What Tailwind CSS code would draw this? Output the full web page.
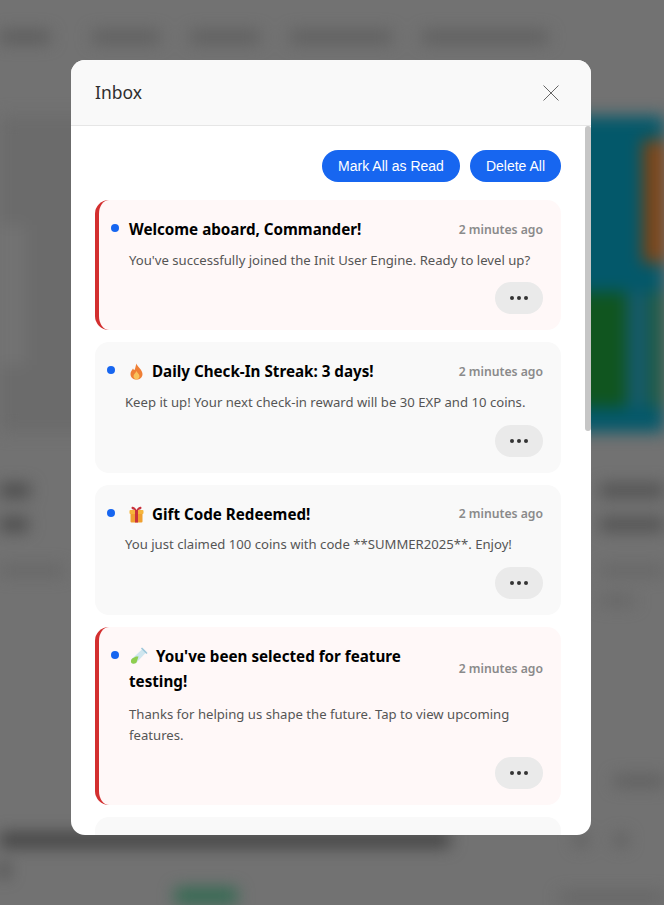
<!DOCTYPE html>
<html lang="en">
<head>
  <meta charset="UTF-8">
  <meta name="viewport" content="width=device-width, initial-scale=1.0">
  <title>Inbox</title>
  <script src="https://cdn.jsdelivr.net/npm/@tailwindcss/browser@4"></script>
</head>
<body class="bg-[#727272] overflow-hidden font-['Noto_Sans',sans-serif]">
<div class="relative w-[664px] h-[905px] overflow-hidden">

  <!-- Blurred page behind the modal -->
  <div class="w-[664px] h-[905px] blur-[8px]">
    <div class="h-[116px] pt-[31px] flex gap-[30px]">
      <div class="w-[50px] h-[12px] bg-[#5a5a5a]"></div>
      <div class="w-[68px] h-[12px] ml-[12px] bg-[#5e5e5e]"></div>
      <div class="w-[70px] h-[12px] bg-[#5e5e5e]"></div>
      <div class="w-[102px] h-[12px] bg-[#5e5e5e]"></div>
      <div class="w-[126px] h-[12px] bg-[#5e5e5e]"></div>
    </div>
    <div class="h-[316px] flex justify-between">
      <div class="w-[100px] bg-[#6b6b6b] pt-[109px]">
        <div class="w-[25px] h-[140px] bg-[#737373]"></div>
      </div>
      <div class="w-[90px] bg-[#03586a] pt-[24px] pb-[25px] flex flex-col justify-between">
        <div class="ml-[69px] h-[123px] bg-[#7f4313]"></div>
        <div class="h-[115px] flex">
          <div class="w-[53px] bg-[#10551f]"></div>
          <div class="w-[20px] bg-[#155a6e]"></div>
          <div class="flex-1 bg-[#1b5a45]"></div>
        </div>
      </div>
    </div>
    <div class="h-[401px] pt-[52px] flex justify-between">
      <div class="w-[40px] flex flex-col gap-[21px]">
        <div class="w-[30px] h-[13px] bg-[#484848]"></div>
        <div class="w-[28px] h-[13px] bg-[#484848]"></div>
        <div class="w-[64px] h-[9px] mt-[14px] bg-[#646464]"></div>
      </div>
      <div class="w-[64px] flex flex-col gap-[21px]">
        <div class="h-[13px] bg-[#505050]"></div>
        <div class="h-[13px] bg-[#505050]"></div>
        <div class="h-[9px] mt-[14px] bg-[#646464]"></div>
        <div class="w-[34px] h-[9px] bg-[#646464]"></div>
        <div class="h-[10px] mt-[150px] ml-[14px] bg-[#5c5c5c]"></div>
      </div>
    </div>
    <div class="flex justify-between pr-[36px]">
      <div class="w-[450px] h-[14px] bg-[#404040]"></div>
      <div class="flex gap-[26px]">
        <div class="w-[14px] h-[14px] rounded-full bg-[#5e5e5e]"></div>
        <div class="w-[14px] h-[14px] rounded-full bg-[#5e5e5e]"></div>
      </div>
    </div>
    <div class="w-[8px] h-[14px] mt-[16px] bg-[#404040]"></div>
    <div class="flex justify-between mt-[11px]">
      <div class="w-[62px] h-[16px] ml-[175px] bg-[#2f6a50]"></div>
      <div class="w-[104px] h-[9px] mt-[5px] bg-[#626262]"></div>
    </div>
  </div>

  <!-- Inbox modal -->
  <div class="absolute inset-0 pt-[60px] pl-[71px]">
    <div class="relative w-[520px] h-[775px] rounded-[14px] bg-white overflow-hidden flex flex-col">
      <div class="h-[66px] shrink-0 bg-[#f9f9f9] border-b border-[#e6e6e6] pl-[24px] pr-[32px] flex items-center justify-between">
        <h2 class="text-[17.5px] text-[#2e2e2e]">Inbox</h2>
        <svg class="w-[16px] h-[16px]" viewBox="0 0 16 16" fill="none" stroke="#666666" stroke-width="1"><path d="M0.5 0.5 15.5 15.5M15.5 0.5 0.5 15.5"/></svg>
      </div>

      <div class="flex-1 overflow-hidden pl-[24px] pr-[30px] pt-[24px]">
        <div class="flex justify-end gap-[10px] mb-[18px] font-['Liberation_Sans',sans-serif]">
          <button class="h-[32px] w-[138px] rounded-full bg-[#1766f0] text-white text-[14px]">Mark All as Read</button>
          <button class="h-[32px] w-[91px] rounded-full bg-[#1766f0] text-white text-[14px]">Delete All</button>
        </div>

        <div class="flex flex-col gap-[12px]">
          <!-- unread -->
          <div class="relative rounded-[14px] bg-[#fff8f8] border-l-4 border-[#d32f2f] pl-[30px] pr-[18px] pt-[16px] pb-[16px]">
            <span class="absolute left-[12px] top-[24px] w-[8px] h-[8px] rounded-full bg-[#1766f0]"></span>
            <div class="flex items-center justify-between gap-[16px]">
              <h3 class="pt-[1px] text-[15.2px] leading-[25.5px] font-bold text-black">Welcome aboard, Commander!</h3>
              <span class="shrink-0 mt-[1px] text-[12.2px] font-semibold text-[#8a8a8a]">2 minutes ago</span>
            </div>
            <p class="mt-[7px] text-[13.13px] leading-[20.8px] text-[#555555]">You've successfully joined the Init User Engine. Ready to level up?</p>
            <div class="flex justify-end mt-[12px]">
              <button class="h-[32px] w-[48px] rounded-full bg-[#eaeaea] flex items-center justify-center gap-[3px]">
                <i class="w-[4px] h-[4px] rounded-full bg-[#333333]"></i><i class="w-[4px] h-[4px] rounded-full bg-[#333333]"></i><i class="w-[4px] h-[4px] rounded-full bg-[#333333]"></i>
              </button>
            </div>
          </div>

          <div class="relative rounded-[14px] bg-[#f9f9f9] pl-[30px] pr-[18px] pt-[16px] pb-[16px]">
            <span class="absolute left-[12px] top-[24px] w-[8px] h-[8px] rounded-full bg-[#1766f0]"></span>
            <div class="flex items-center justify-between gap-[16px]">
              <h3 class="pt-[1px] text-[15.2px] leading-[25.5px] font-bold text-black pl-[4px]">
                <svg class="inline-block w-[15px] h-[17px] mr-[8px] align-[-3px]" viewBox="0 0 15 17"><path d="M7.5 0.5C8 3.5 13.5 6.5 13.5 11C13.5 14.5 11 16.5 7.5 16.5C4 16.5 1.5 14.5 1.5 11C1.5 8.5 3 7 4 5.5C4.5 6.5 5 7 5.5 7C6.5 5 6.5 3 7.5 0.5Z" fill="#ef7f35"/><path d="M7.5 8C8 10 10.5 11 10.5 13.3C10.5 15.2 9 16.5 7.5 16.5C6 16.5 4.5 15.2 4.5 13.3C4.5 11 7 10 7.5 8Z" fill="#f9c25b"/></svg>Daily Check-In Streak: 3 days!</h3>
              <span class="shrink-0 mt-[1px] text-[12.2px] font-semibold text-[#8a8a8a]">2 minutes ago</span>
            </div>
            <p class="mt-[7px] text-[13.13px] leading-[20.8px] text-[#555555]">Keep it up! Your next check-in reward will be 30 EXP and 10 coins.</p>
            <div class="flex justify-end mt-[12px]">
              <button class="h-[32px] w-[48px] rounded-full bg-[#eaeaea] flex items-center justify-center gap-[3px]">
                <i class="w-[4px] h-[4px] rounded-full bg-[#333333]"></i><i class="w-[4px] h-[4px] rounded-full bg-[#333333]"></i><i class="w-[4px] h-[4px] rounded-full bg-[#333333]"></i>
              </button>
            </div>
          </div>

          <div class="relative rounded-[14px] bg-[#f9f9f9] pl-[30px] pr-[18px] pt-[16px] pb-[16px]">
            <span class="absolute left-[12px] top-[24px] w-[8px] h-[8px] rounded-full bg-[#1766f0]"></span>
            <div class="flex items-center justify-between gap-[16px]">
              <h3 class="pt-[1px] text-[15.2px] leading-[25.5px] font-bold text-black pl-[4px]">
                <svg class="inline-block w-[15px] h-[17px] mr-[8px] align-[-3px]" viewBox="0 0 15 17"><rect x="1.5" y="6.5" width="12" height="10" rx="1" fill="#f0a030"/><rect x="0.5" y="4" width="14" height="4" rx="1" fill="#f5b53c"/><rect x="6" y="4" width="3" height="12.5" fill="#c8323c"/><path d="M7.5 4C5.5 0.5 2.5 0 2.5 2C2.5 3.5 5 4 7.5 4C10 4 12.5 3.5 12.5 2C12.5 0 9.5 0.5 7.5 4Z" fill="#c8323c"/></svg>Gift Code Redeemed!</h3>
              <span class="shrink-0 mt-[1px] text-[12.2px] font-semibold text-[#8a8a8a]">2 minutes ago</span>
            </div>
            <p class="mt-[7px] text-[13.13px] leading-[20.8px] text-[#555555]">You just claimed 100 coins with code **SUMMER2025**. Enjoy!</p>
            <div class="flex justify-end mt-[12px]">
              <button class="h-[32px] w-[48px] rounded-full bg-[#eaeaea] flex items-center justify-center gap-[3px]">
                <i class="w-[4px] h-[4px] rounded-full bg-[#333333]"></i><i class="w-[4px] h-[4px] rounded-full bg-[#333333]"></i><i class="w-[4px] h-[4px] rounded-full bg-[#333333]"></i>
              </button>
            </div>
          </div>

          <!-- unread -->
          <div class="relative rounded-[14px] bg-[#fff8f8] border-l-4 border-[#d32f2f] pl-[30px] pr-[18px] pt-[16px] pb-[16px]">
            <span class="absolute left-[12px] top-[24px] w-[8px] h-[8px] rounded-full bg-[#1766f0]"></span>
            <div class="flex items-center justify-between gap-[16px]">
              <h3 class="pt-[1px] text-[15.2px] leading-[25.5px] font-bold text-black w-[290px]">
                <svg class="inline-block w-[18px] h-[18px] ml-[1px] mr-[8px] align-[-3px]" viewBox="0 0 18 18"><path d="M13 1.5 16.5 5 6.5 15.5C5 17 2.5 17 1.5 16C0.5 15 0.8 12.8 2.2 11.5Z" fill="#cfe6ef"/><path d="M8.5 9.5 6.5 15.5C5 17 2.5 17 1.5 16C0.5 15 0.8 12.8 2.2 11.5L6 9.5Z" fill="#8fce4e"/><path d="M11.5 1 17 6.5" stroke="#9dc7da" stroke-width="1.6"/></svg>You've been selected for feature testing!</h3>
              <span class="shrink-0 mt-[1px] text-[12.2px] font-semibold text-[#8a8a8a]">2 minutes ago</span>
            </div>
            <p class="mt-[9px] text-[13.13px] leading-[20.8px] text-[#555555]">Thanks for helping us shape the future. Tap to view upcoming features.</p>
            <div class="flex justify-end mt-[12px]">
              <button class="h-[32px] w-[48px] rounded-full bg-[#eaeaea] flex items-center justify-center gap-[3px]">
                <i class="w-[4px] h-[4px] rounded-full bg-[#333333]"></i><i class="w-[4px] h-[4px] rounded-full bg-[#333333]"></i><i class="w-[4px] h-[4px] rounded-full bg-[#333333]"></i>
              </button>
            </div>
          </div>

          <div class="h-[130px] rounded-[14px] bg-[#f9f9f9]"></div>
        </div>
      </div>

      <!-- scrollbar thumb -->
      <div class="absolute right-0 top-[66px] w-[6px] h-[305px] rounded-[3px] bg-[#c6c6c6]"></div>
    </div>
  </div>
</div>
</body>
</html>
